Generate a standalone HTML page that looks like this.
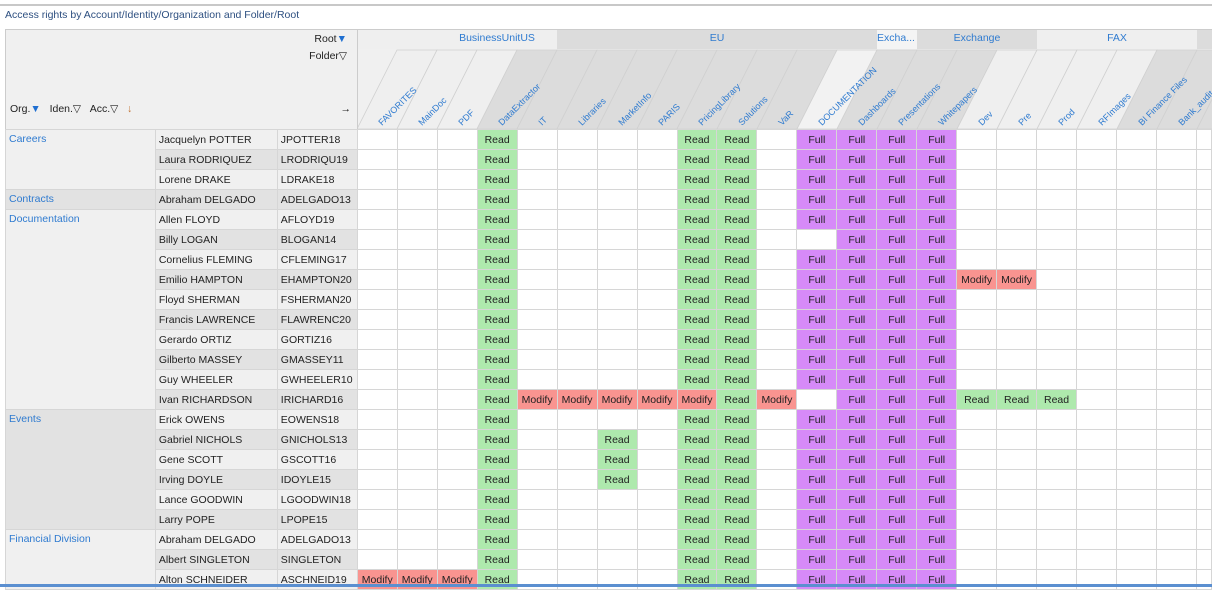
<!DOCTYPE html>
<html><head><meta charset="utf-8"><style>
body{margin:0;width:1212px;height:587px;overflow:hidden;background:#fff;font-family:"Liberation Sans",sans-serif;font-size:10.5px;color:#222;position:relative}
.topline{position:absolute;left:0;top:4px;width:1212px;height:2px;background:#c8c8c8}
.title{position:absolute;left:5px;top:9px;font-size:10.5px;color:#2d4f80}
.hl{position:absolute;left:5px;top:29px;width:351px;height:99px;background:#f0f0f0;border:1px solid #ccc}
.hl span{position:absolute;white-space:nowrap}
.b{color:#1f6fd1}
svg.h{position:absolute;left:357px;top:29px}
table{position:absolute;left:5px;top:129px;border-collapse:collapse;table-layout:fixed}
td{height:19px;padding:0;border:1px solid #d6d6d6;text-align:center;white-space:nowrap;overflow:hidden;font-size:10.5px}
td.o{text-align:left;vertical-align:top;padding:3px 0 0 3px;color:#2f7bd0;height:auto}
td.n{text-align:left;padding-left:3px}
.ol{background:#f0f0f0}.od{background:#e2e2e2}
tr.d td.n{background:#e2e2e2}tr.l td.n{background:#f0f0f0}
td.r{background:#aee9ad}td.m{background:#f99490}td.f{background:#d68af8}
.bl{position:absolute;left:0;top:584px;width:1212px;height:3px;background:#5b8fd0}
</style></head><body>
<div class="topline"></div>
<div class="title">Access rights by Account/Identity/Organization and Folder/Root</div>
<div class="hl">
<span style="right:10px;top:3px">Root<span class="b" style="position:static">&#9660;</span></span>
<span style="right:10px;top:20px">Folder&#9661;</span>
<span style="left:4px;top:73px">Org.<span class="b" style="position:static">&#9660;</span>&nbsp;&nbsp;&nbsp;Iden.&#9661;&nbsp;&nbsp;&nbsp;Acc.&#9661;&nbsp;&nbsp;&nbsp;<span style="position:static;color:#c07030">&#8595;</span></span>
<span style="right:6px;top:73px">&#8594;</span>
</div>
<svg class="h" width="855" height="100" viewBox="357 29 855 100">
<rect x="357" y="29" width="855" height="100" fill="#f0f0f0"/>
<rect x="357" y="29" width="200" height="20" fill="#efefef"/>
<rect x="557" y="29" width="320" height="20" fill="#dcdcdc"/>
<rect x="877" y="29" width="40" height="20" fill="#f4f4f4"/>
<rect x="917" y="29" width="120" height="20" fill="#dcdcdc"/>
<rect x="1037" y="29" width="160" height="20" fill="#efefef"/>
<rect x="1197" y="29" width="15" height="20" fill="#dcdcdc"/>
<line x1="357" y1="29.5" x2="1212" y2="29.5" stroke="#ccc"/>
<g stroke="#d0d0d0" stroke-width="0.8">
<polygon points="357,129 397,129 437,50 397,50" fill="#efefef"/>
<polygon points="397,129 437,129 477,50 437,50" fill="#efefef"/>
<polygon points="437,129 477,129 517,50 477,50" fill="#efefef"/>
<polygon points="477,129 517,129 557,50 517,50" fill="#dcdcdc"/>
<polygon points="517,129 557,129 597,50 557,50" fill="#dcdcdc"/>
<polygon points="557,129 597,129 637,50 597,50" fill="#dcdcdc"/>
<polygon points="597,129 637,129 677,50 637,50" fill="#dcdcdc"/>
<polygon points="637,129 677,129 717,50 677,50" fill="#dcdcdc"/>
<polygon points="677,129 717,129 757,50 717,50" fill="#dcdcdc"/>
<polygon points="717,129 757,129 797,50 757,50" fill="#dcdcdc"/>
<polygon points="757,129 797,129 837,50 797,50" fill="#dcdcdc"/>
<polygon points="797,129 837,129 877,50 837,50" fill="#f2f2f2"/>
<polygon points="837,129 877,129 917,50 877,50" fill="#dcdcdc"/>
<polygon points="877,129 917,129 957,50 917,50" fill="#dcdcdc"/>
<polygon points="917,129 957,129 997,50 957,50" fill="#dcdcdc"/>
<polygon points="957,129 997,129 1037,50 997,50" fill="#efefef"/>
<polygon points="997,129 1037,129 1077,50 1037,50" fill="#efefef"/>
<polygon points="1037,129 1077,129 1117,50 1077,50" fill="#efefef"/>
<polygon points="1077,129 1117,129 1157,50 1117,50" fill="#efefef"/>
<polygon points="1117,129 1157,129 1197,50 1157,50" fill="#dcdcdc"/>
<polygon points="1157,129 1197,129 1237,50 1197,50" fill="#dcdcdc"/>
<polygon points="1197,129 1237,129 1277,50 1237,50" fill="#dcdcdc"/>
</g>
<line x1="357.5" y1="29" x2="357.5" y2="129" stroke="#ccc"/>
<g font-family="Liberation Sans" font-size="10.5" fill="#2f7bd0" text-anchor="middle">
<text x="497" y="41">BusinessUnitUS</text><text x="717" y="41">EU</text><text x="896" y="41">Excha...</text><text x="977" y="41">Exchange</text><text x="1117" y="41">FAX</text>
</g>
<g font-family="Liberation Sans" font-size="9" fill="#2f7bd0">
<text x="382" y="126" transform="rotate(-45 382 126)">FAVORITES</text>
<text x="422" y="126" transform="rotate(-45 422 126)">MainDoc</text>
<text x="462" y="126" transform="rotate(-45 462 126)">PDF</text>
<text x="502" y="126" transform="rotate(-45 502 126)">DataExtractor</text>
<text x="542" y="126" transform="rotate(-45 542 126)">IT</text>
<text x="582" y="126" transform="rotate(-45 582 126)">Libraries</text>
<text x="622" y="126" transform="rotate(-45 622 126)">MarketInfo</text>
<text x="662" y="126" transform="rotate(-45 662 126)">PARIS</text>
<text x="702" y="126" transform="rotate(-45 702 126)">PricingLibrary</text>
<text x="742" y="126" transform="rotate(-45 742 126)">Solutions</text>
<text x="782" y="126" transform="rotate(-45 782 126)">VaR</text>
<text x="822" y="126" transform="rotate(-45 822 126)">DOCUMENTATION</text>
<text x="862" y="126" transform="rotate(-45 862 126)">Dashboards</text>
<text x="902" y="126" transform="rotate(-45 902 126)">Presentations</text>
<text x="942" y="126" transform="rotate(-45 942 126)">Whitepapers</text>
<text x="982" y="126" transform="rotate(-45 982 126)">Dev</text>
<text x="1022" y="126" transform="rotate(-45 1022 126)">Pre</text>
<text x="1062" y="126" transform="rotate(-45 1062 126)">Prod</text>
<text x="1102" y="126" transform="rotate(-45 1102 126)">RFImages</text>
<text x="1142" y="126" transform="rotate(-45 1142 126)">BI Finance Files</text>
<text x="1182" y="126" transform="rotate(-45 1182 126)">Bank_audit</text>
</g>
</svg>
<table>
<colgroup><col style="width:150px"><col style="width:122px"><col style="width:80px"><col span="21" style="width:40px"><col style="width:15px"></colgroup>
<tr class="l"><td class="o ol" rowspan="3">Careers</td><td class="n">Jacquelyn POTTER</td><td class="n">JPOTTER18</td><td></td><td></td><td></td><td class="r">Read</td><td></td><td></td><td></td><td></td><td class="r">Read</td><td class="r">Read</td><td></td><td class="f">Full</td><td class="f">Full</td><td class="f">Full</td><td class="f">Full</td><td></td><td></td><td></td><td></td><td></td><td></td><td></td></tr>
<tr class="d"><td class="n">Laura RODRIQUEZ</td><td class="n">LRODRIQU19</td><td></td><td></td><td></td><td class="r">Read</td><td></td><td></td><td></td><td></td><td class="r">Read</td><td class="r">Read</td><td></td><td class="f">Full</td><td class="f">Full</td><td class="f">Full</td><td class="f">Full</td><td></td><td></td><td></td><td></td><td></td><td></td><td></td></tr>
<tr class="l"><td class="n">Lorene DRAKE</td><td class="n">LDRAKE18</td><td></td><td></td><td></td><td class="r">Read</td><td></td><td></td><td></td><td></td><td class="r">Read</td><td class="r">Read</td><td></td><td class="f">Full</td><td class="f">Full</td><td class="f">Full</td><td class="f">Full</td><td></td><td></td><td></td><td></td><td></td><td></td><td></td></tr>
<tr class="d"><td class="o od">Contracts</td><td class="n">Abraham DELGADO</td><td class="n">ADELGADO13</td><td></td><td></td><td></td><td class="r">Read</td><td></td><td></td><td></td><td></td><td class="r">Read</td><td class="r">Read</td><td></td><td class="f">Full</td><td class="f">Full</td><td class="f">Full</td><td class="f">Full</td><td></td><td></td><td></td><td></td><td></td><td></td><td></td></tr>
<tr class="l"><td class="o ol" rowspan="10">Documentation</td><td class="n">Allen FLOYD</td><td class="n">AFLOYD19</td><td></td><td></td><td></td><td class="r">Read</td><td></td><td></td><td></td><td></td><td class="r">Read</td><td class="r">Read</td><td></td><td class="f">Full</td><td class="f">Full</td><td class="f">Full</td><td class="f">Full</td><td></td><td></td><td></td><td></td><td></td><td></td><td></td></tr>
<tr class="d"><td class="n">Billy LOGAN</td><td class="n">BLOGAN14</td><td></td><td></td><td></td><td class="r">Read</td><td></td><td></td><td></td><td></td><td class="r">Read</td><td class="r">Read</td><td></td><td></td><td class="f">Full</td><td class="f">Full</td><td class="f">Full</td><td></td><td></td><td></td><td></td><td></td><td></td><td></td></tr>
<tr class="l"><td class="n">Cornelius FLEMING</td><td class="n">CFLEMING17</td><td></td><td></td><td></td><td class="r">Read</td><td></td><td></td><td></td><td></td><td class="r">Read</td><td class="r">Read</td><td></td><td class="f">Full</td><td class="f">Full</td><td class="f">Full</td><td class="f">Full</td><td></td><td></td><td></td><td></td><td></td><td></td><td></td></tr>
<tr class="d"><td class="n">Emilio HAMPTON</td><td class="n">EHAMPTON20</td><td></td><td></td><td></td><td class="r">Read</td><td></td><td></td><td></td><td></td><td class="r">Read</td><td class="r">Read</td><td></td><td class="f">Full</td><td class="f">Full</td><td class="f">Full</td><td class="f">Full</td><td class="m">Modify</td><td class="m">Modify</td><td></td><td></td><td></td><td></td><td></td></tr>
<tr class="l"><td class="n">Floyd SHERMAN</td><td class="n">FSHERMAN20</td><td></td><td></td><td></td><td class="r">Read</td><td></td><td></td><td></td><td></td><td class="r">Read</td><td class="r">Read</td><td></td><td class="f">Full</td><td class="f">Full</td><td class="f">Full</td><td class="f">Full</td><td></td><td></td><td></td><td></td><td></td><td></td><td></td></tr>
<tr class="d"><td class="n">Francis LAWRENCE</td><td class="n">FLAWRENC20</td><td></td><td></td><td></td><td class="r">Read</td><td></td><td></td><td></td><td></td><td class="r">Read</td><td class="r">Read</td><td></td><td class="f">Full</td><td class="f">Full</td><td class="f">Full</td><td class="f">Full</td><td></td><td></td><td></td><td></td><td></td><td></td><td></td></tr>
<tr class="l"><td class="n">Gerardo ORTIZ</td><td class="n">GORTIZ16</td><td></td><td></td><td></td><td class="r">Read</td><td></td><td></td><td></td><td></td><td class="r">Read</td><td class="r">Read</td><td></td><td class="f">Full</td><td class="f">Full</td><td class="f">Full</td><td class="f">Full</td><td></td><td></td><td></td><td></td><td></td><td></td><td></td></tr>
<tr class="d"><td class="n">Gilberto MASSEY</td><td class="n">GMASSEY11</td><td></td><td></td><td></td><td class="r">Read</td><td></td><td></td><td></td><td></td><td class="r">Read</td><td class="r">Read</td><td></td><td class="f">Full</td><td class="f">Full</td><td class="f">Full</td><td class="f">Full</td><td></td><td></td><td></td><td></td><td></td><td></td><td></td></tr>
<tr class="l"><td class="n">Guy WHEELER</td><td class="n">GWHEELER10</td><td></td><td></td><td></td><td class="r">Read</td><td></td><td></td><td></td><td></td><td class="r">Read</td><td class="r">Read</td><td></td><td class="f">Full</td><td class="f">Full</td><td class="f">Full</td><td class="f">Full</td><td></td><td></td><td></td><td></td><td></td><td></td><td></td></tr>
<tr class="d"><td class="n">Ivan RICHARDSON</td><td class="n">IRICHARD16</td><td></td><td></td><td></td><td class="r">Read</td><td class="m">Modify</td><td class="m">Modify</td><td class="m">Modify</td><td class="m">Modify</td><td class="m">Modify</td><td class="r">Read</td><td class="m">Modify</td><td></td><td class="f">Full</td><td class="f">Full</td><td class="f">Full</td><td class="r">Read</td><td class="r">Read</td><td class="r">Read</td><td></td><td></td><td></td><td></td></tr>
<tr class="l"><td class="o od" rowspan="6">Events</td><td class="n">Erick OWENS</td><td class="n">EOWENS18</td><td></td><td></td><td></td><td class="r">Read</td><td></td><td></td><td></td><td></td><td class="r">Read</td><td class="r">Read</td><td></td><td class="f">Full</td><td class="f">Full</td><td class="f">Full</td><td class="f">Full</td><td></td><td></td><td></td><td></td><td></td><td></td><td></td></tr>
<tr class="d"><td class="n">Gabriel NICHOLS</td><td class="n">GNICHOLS13</td><td></td><td></td><td></td><td class="r">Read</td><td></td><td></td><td class="r">Read</td><td></td><td class="r">Read</td><td class="r">Read</td><td></td><td class="f">Full</td><td class="f">Full</td><td class="f">Full</td><td class="f">Full</td><td></td><td></td><td></td><td></td><td></td><td></td><td></td></tr>
<tr class="l"><td class="n">Gene SCOTT</td><td class="n">GSCOTT16</td><td></td><td></td><td></td><td class="r">Read</td><td></td><td></td><td class="r">Read</td><td></td><td class="r">Read</td><td class="r">Read</td><td></td><td class="f">Full</td><td class="f">Full</td><td class="f">Full</td><td class="f">Full</td><td></td><td></td><td></td><td></td><td></td><td></td><td></td></tr>
<tr class="d"><td class="n">Irving DOYLE</td><td class="n">IDOYLE15</td><td></td><td></td><td></td><td class="r">Read</td><td></td><td></td><td class="r">Read</td><td></td><td class="r">Read</td><td class="r">Read</td><td></td><td class="f">Full</td><td class="f">Full</td><td class="f">Full</td><td class="f">Full</td><td></td><td></td><td></td><td></td><td></td><td></td><td></td></tr>
<tr class="l"><td class="n">Lance GOODWIN</td><td class="n">LGOODWIN18</td><td></td><td></td><td></td><td class="r">Read</td><td></td><td></td><td></td><td></td><td class="r">Read</td><td class="r">Read</td><td></td><td class="f">Full</td><td class="f">Full</td><td class="f">Full</td><td class="f">Full</td><td></td><td></td><td></td><td></td><td></td><td></td><td></td></tr>
<tr class="d"><td class="n">Larry POPE</td><td class="n">LPOPE15</td><td></td><td></td><td></td><td class="r">Read</td><td></td><td></td><td></td><td></td><td class="r">Read</td><td class="r">Read</td><td></td><td class="f">Full</td><td class="f">Full</td><td class="f">Full</td><td class="f">Full</td><td></td><td></td><td></td><td></td><td></td><td></td><td></td></tr>
<tr class="l"><td class="o ol" rowspan="3">Financial Division</td><td class="n">Abraham DELGADO</td><td class="n">ADELGADO13</td><td></td><td></td><td></td><td class="r">Read</td><td></td><td></td><td></td><td></td><td class="r">Read</td><td class="r">Read</td><td></td><td class="f">Full</td><td class="f">Full</td><td class="f">Full</td><td class="f">Full</td><td></td><td></td><td></td><td></td><td></td><td></td><td></td></tr>
<tr class="d"><td class="n">Albert SINGLETON</td><td class="n">SINGLETON</td><td></td><td></td><td></td><td class="r">Read</td><td></td><td></td><td></td><td></td><td class="r">Read</td><td class="r">Read</td><td></td><td class="f">Full</td><td class="f">Full</td><td class="f">Full</td><td class="f">Full</td><td></td><td></td><td></td><td></td><td></td><td></td><td></td></tr>
<tr class="l"><td class="n">Alton SCHNEIDER</td><td class="n">ASCHNEID19</td><td class="m">Modify</td><td class="m">Modify</td><td class="m">Modify</td><td class="r">Read</td><td></td><td></td><td></td><td></td><td class="r">Read</td><td class="r">Read</td><td></td><td class="f">Full</td><td class="f">Full</td><td class="f">Full</td><td class="f">Full</td><td></td><td></td><td></td><td></td><td></td><td></td><td></td></tr>
</table>
<div class="bl"></div>
</body></html>
